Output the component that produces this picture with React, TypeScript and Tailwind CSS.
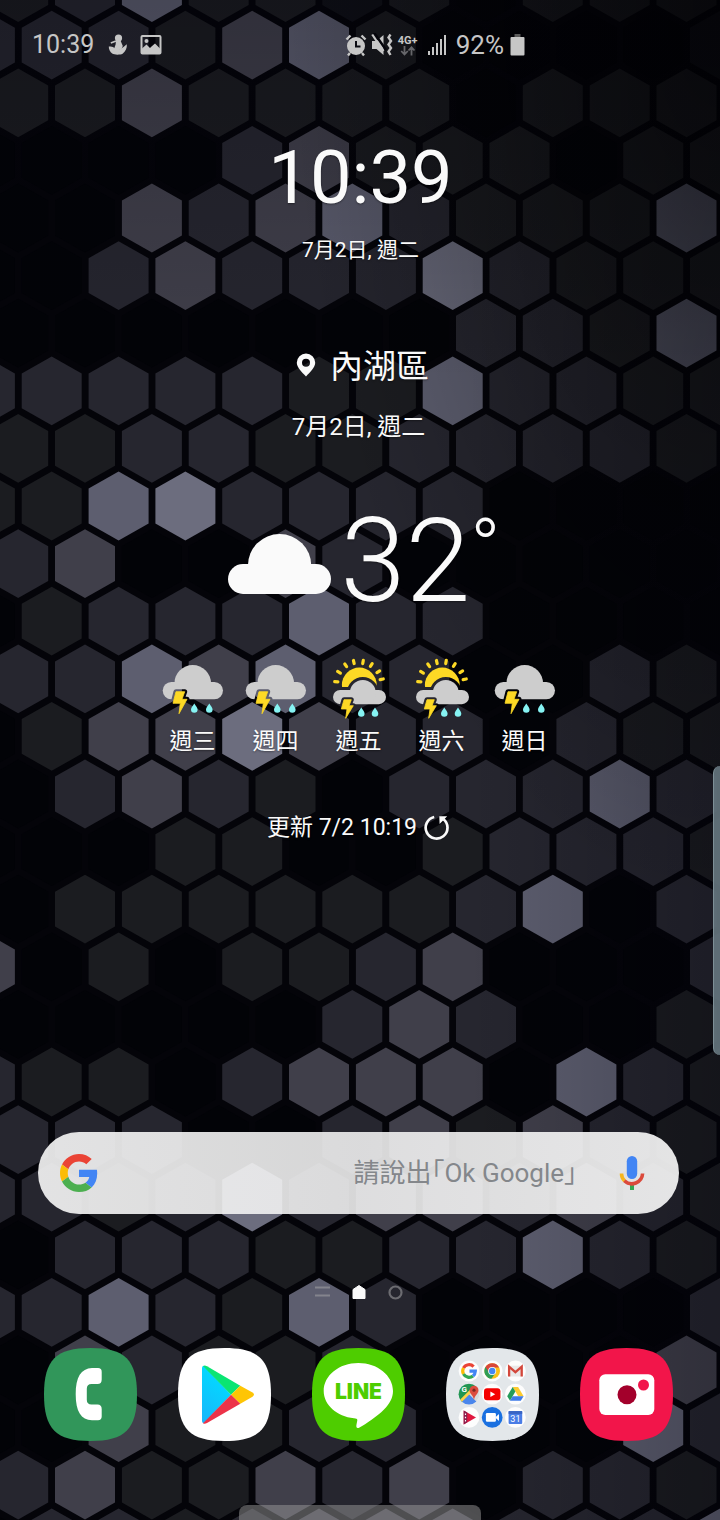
import type { ReactNode } from "react";

/* Brightness of every wallpaper cell, row by row. Even rows start at x=18, odd rows at x=-15. */
const ROWS = [
  "12411a10111",
  "22213410000a",
  "11311110111",
  "000023111011",
  "00323421114",
  "002322252111",
  "00000002214",
  "222221142211",
  "11221122221",
  "114522220000",
  "23003200000",
  "012224220000",
  "22434220021",
  "013353220211",
  "02321022242",
  "000110012221",
  "01111112402",
  "301011230002",
  "00000232001",
  "211023330421",
  "22200231321",
  "221252332321",
  "02221122421",
  "224214200002",
  "03211200003",
  "003112200042",
  "23113230221",
  "022123332224",
];

const FILL: Record<string, string> = {
  "0": "#020307",
  a: "#101117",
  "1": "#1b1c20",
  "2": "#26262f",
  "3": "#403f4a",
  "4": "#5d5e6f",
  "5": "#6c6d7e",
};

const PITCH_X = 66.83;
const PITCH_Y = 57.6;

function hexPoints(cx: number, cy: number) {
  const w = 30;
  const r = 34.4;
  const s = 17.4;
  return [
    [cx, cy - r],
    [cx + w, cy - s],
    [cx + w, cy + s],
    [cx, cy + r],
    [cx - w, cy + s],
    [cx - w, cy - s],
  ]
    .map((p) => p.map((n) => n.toFixed(1)).join(","))
    .join(" ");
}

function Wallpaper() {
  return (
    <svg
      className="absolute inset-0 h-full w-full"
      viewBox="0 0 720 1520"
      preserveAspectRatio="xMidYMin slice"
      aria-hidden="true"
    >
      <defs>
        <linearGradient id="shadeTop" x1="0" y1="0" x2="0" y2="1">
          <stop offset="0" stopColor="#00000a" stopOpacity="0.25" />
          <stop offset="0.25" stopColor="#00000a" stopOpacity="0" />
        </linearGradient>
        <linearGradient id="shadeRight" x1="0" y1="0" x2="1" y2="0">
          <stop offset="0.65" stopColor="#00000a" stopOpacity="0" />
          <stop offset="1" stopColor="#00000a" stopOpacity="0.25" />
        </linearGradient>
        <radialGradient id="shadeCorner" cx="1" cy="0" r="0.6">
          <stop offset="0" stopColor="#000" stopOpacity="0.5" />
          <stop offset="1" stopColor="#000" stopOpacity="0" />
        </radialGradient>
      </defs>
      <rect width="720" height="1520" fill="#040409" />
      {ROWS.map((row, r) =>
        row.split("").map((level, c) => (
          <polygon
            key={`${r}-${c}`}
            points={hexPoints((r % 2 === 0 ? 18.2 : -15.1) + c * PITCH_X, -12.4 + r * PITCH_Y)}
            fill={FILL[level]}
          />
        )),
      )}
      <rect width="720" height="1520" fill="url(#shadeTop)" />
      <rect width="720" height="1520" fill="url(#shadeRight)" />
      <rect width="720" height="1520" fill="url(#shadeCorner)" />
    </svg>
  );
}

function StatusBar() {
  return (
    <header className="flex h-[90px] items-center justify-between pl-8 pr-[192px] leading-8 text-[#c6c6c6]">
      <div className="flex items-center">
        <time className="text-[25px]">10:39</time>
        <svg className="ml-[14px]" width="20" height="22" viewBox="0 0 20 22" fill="currentColor" aria-label="通知" role="img">
          <circle cx="10.500" cy="4" r="3.600" />
          <path d="M8 6 12.500 6.500 14.800 12 13 16 6 15 7.600 10.400z" />
          <path d="M.8 12.600C3.200 12 5.400 12.600 7 14.600L12 15.200 15.500 13 18.800 10.200C19.200 14 17.600 17.400 14.600 19.800 12 21 6.400 21 4.200 19.600 2.200 18 .6 15.400.8 12.600z" />
          <path d="M2.800 9 8 7" stroke="currentColor" strokeWidth="1.600" />
        </svg>
        <svg className="ml-3" width="22" height="22" viewBox="0 0 22 22" aria-label="圖片" role="img">
          <rect x="1.500" y="2" width="19" height="17.500" rx="1" fill="none" stroke="currentColor" strokeWidth="2" />
          <circle cx="6.500" cy="7" r="2" fill="currentColor" />
          <path d="M2 19v-4.500l4.500-4 3.500 3.500 1.500-1.500 3.500-3 5 5V19z" fill="currentColor" />
        </svg>
      </div>
      <div className="flex items-center">
        <svg width="22" height="24" viewBox="0 0 22 24" fill="none" stroke="currentColor" aria-label="鬧鐘" role="img">
          <circle cx="11" cy="13" r="9" fill="currentColor" stroke="none" />
          <path d="M1.500 6.500 5.500 2.500M20.500 6.500 16.500 2.500M5 20 3 22.500M17 20l2 2.500" strokeWidth="2.400" />
          <path d="M11 8v5.500h4.500" stroke="#0b0b12" strokeWidth="2" />
        </svg>
        <svg className="ml-[3px]" width="24" height="24" viewBox="0 0 24 24" fill="none" stroke="currentColor" aria-label="靜音" role="img">
          <path d="M2 8H6.500L13.500 2V22L6.500 16H2z" fill="currentColor" stroke="none" />
          <path d="M4-.500 16 17" stroke="#05050b" strokeWidth="2.400" />
          <path d="M2.200 1.500 13.500 18" strokeWidth="2.200" />
          <path d="M20.500 1.500 18.500 4.500 21 8 18.500 11.500 21 15 18.500 18.500 20.500 22" strokeWidth="2.400" />
        </svg>
        <div className="ml-[3px] flex w-[22px] flex-col items-center">
          <span className="text-[11px] font-bold leading-[11px]">4G+</span>
          <svg width="16" height="10" viewBox="0 0 16 10" fill="none" stroke="#66666a" strokeWidth="1.800" aria-hidden="true">
            <path d="M4.500 0v8M1.200 5l3.300 3.500L7.800 5M11.500 9.500V1.500M8.500 4.500l3-3.200 3 3.200" />
          </svg>
        </div>
        <svg className="ml-[9px]" width="19" height="22" viewBox="0 0 19 22" fill="currentColor" aria-label="訊號" role="img">
          <rect x="0" y="17" width="2" height="4" />
          <rect x="4" y="13" width="2" height="8" />
          <rect x="8" y="9" width="2" height="12" />
          <rect x="12" y="5" width="2" height="16" />
          <rect x="16" y="1" width="2" height="20" />
        </svg>
        <span className="ml-[9px] text-[26px]">92%</span>
        <svg className="ml-[6px]" width="15" height="22" viewBox="0 0 15 22" aria-label="電池" role="img">
          <rect x="4.500" y="0" width="6" height="4" fill="#5a5a5a" />
          <rect x="0.500" y="3" width="14" height="18.500" rx="1" fill="#c6c6c6" />
        </svg>
      </div>
    </header>
  );
}

function Drops({ xs, y }: { xs: number[]; y: number }) {
  return (
    <>
      {xs.map((x) => (
        <path
          key={x}
          transform={`translate(${x} ${y})`}
          d="M0-4.800C1.500-2.400 3.300-.6 3.300 1.200A3.300 3.300 0 0 1-3.300 1.200C-3.300-.6-1.500-2.400 0-4.800z"
          fill="#86f3f3"
        />
      ))}
    </>
  );
}

function StormIcon({ id }: { id: string }) {
  const bolt = "15,35.700 23.700,35.700 21,43.300 26,43.300 18,57.700 19.300,47.300 12,47.300";
  return (
    <svg width="64" height="64" viewBox="0 0 64 64" role="img" aria-label="雷雨">
      <mask id={`${id}-m`}>
        <rect width="64" height="64" fill="#fff" />
        <polygon points={bolt} fill="#000" stroke="#000" strokeWidth="5" strokeLinejoin="round" />
      </mask>
      <g fill="#cdcdcd" mask={`url(#${id}-m)`}>
        <rect x="1.700" y="26" width="60.300" height="17.200" rx="8.600" />
        <circle cx="31.700" cy="27.500" r="18.400" clipPath="inset(0 0 6px 0)" />
      </g>
      <polygon points={bolt} fill="#fdd925" stroke="#fdd925" strokeWidth="0.800" />
      <Drops xs={[33.3, 48.3]} y={52.3} />
    </svg>
  );
}

function SunStormIcon({ id }: { id: string }) {
  const bolt = "17,43.700 24.300,43.700 22,49.700 26.300,49.700 18.700,62.300 20,53 14.300,53";
  const rays = [
    [9.3, 25.7],
    [12, 16.3],
    [18.7, 9.3],
    [26.8, 6],
    [36, 6],
    [44.3, 9],
    [51.3, 15.7],
    [54.7, 23.3],
  ];
  return (
    <svg width="64" height="64" viewBox="0 0 64 64" role="img" aria-label="晴時雷雨">
      <mask id={`${id}-b`}>
        <rect width="64" height="64" fill="#fff" />
        <polygon points={bolt} fill="#000" stroke="#000" strokeWidth="5" strokeLinejoin="round" />
      </mask>
      <mask id={`${id}-s`}>
        <rect width="64" height="64" fill="#fff" />
        <rect x="6" y="34" width="53" height="14.500" rx="7" stroke="#000" strokeWidth="6" />
        <circle cx="35.800" cy="37" r="16" />
        <rect y="36" width="64" height="28" />
      </mask>
      <circle cx="32.300" cy="29" r="17.400" fill="#fdd925" mask={`url(#${id}-s)`} />
      {rays.map(([x, y]) => {
        const d = Math.hypot(x - 32, y - 28);
        const ux = ((x - 32) / d) * 1.6;
        const uy = ((y - 28) / d) * 1.6;
        return (
          <line
            key={x}
            x1={x - ux}
            y1={y - uy}
            x2={x + ux}
            y2={y + uy}
            stroke="#fdd925"
            strokeWidth="3.200"
            strokeLinecap="round"
          />
        );
      })}
      <g fill="#cdcdcd" mask={`url(#${id}-b)`}>
        <rect x="6" y="34" width="53" height="14.200" rx="7.100" />
        <circle cx="35.800" cy="37" r="13" clipPath="inset(0 0 5px 0)" />
      </g>
      <polygon points={bolt} fill="#fdd925" stroke="#fdd925" strokeWidth="0.800" />
      <Drops xs={[34.3, 48]} y={56.3} />
    </svg>
  );
}

const FORECAST = [
  { day: "週三", sunny: false },
  { day: "週四", sunny: false },
  { day: "週五", sunny: true },
  { day: "週六", sunny: true },
  { day: "週日", sunny: false },
];

function Widgets() {
  return (
    <main className="flex flex-col items-center text-[#fafafa] [text-shadow:0_1px_2px_rgba(0,0,0,0.4)]">
      <section className="mt-12 flex flex-col items-center pl-1">
        <time className="text-[74px] leading-[80px]">10:39</time>
        <p className="mt-4 text-[21px] leading-8">7月2日, 週二</p>
      </section>
      <section className="flex flex-col items-center">
        <h1 className="mt-[81px] flex items-center pl-2 text-[33px] leading-10">
          <svg className="mb-1 mr-[14px]" width="20" height="24" viewBox="0 0 20 24" aria-hidden="true">
            <path
              fillRule="evenodd"
              fill="currentColor"
              d="M10 .5A9.200 9.200 0 0 1 19.200 9.700C19.200 14.500 14 19 10 23.500 6 19 .8 14.500.8 9.700A9.200 9.200 0 0 1 10 .5zM10 5.700a4 4 0 1 0 0 8 4 4 0 0 0 0-8z"
            />
          </svg>
          內湖區
        </h1>
        <p className="mt-6 text-2xl leading-8">7月2日, 週二</p>
        <div className="mt-[67px] flex h-[100px] items-start pl-3">
          <svg className="mr-[9px] mt-6" width="103" height="60" viewBox="0 0 103 60" fill="#fafafa" role="img" aria-label="多雲">
            <rect y="30" width="103" height="30" rx="15" />
            <circle cx="51.600" cy="31.700" r="31.700" clipPath="inset(0 0 15px 0)" />
          </svg>
          <p className="flex items-start font-light">
            <span className="text-[117px] leading-[102px]">32</span>
            <span className="text-[80px] leading-[76px]">°</span>
          </p>
        </div>
        <ul className="mt-[46px] flex gap-[19px]">
          {FORECAST.map((f, i) => (
            <li key={f.day} className="flex flex-col items-center">
              {f.sunny ? <SunStormIcon id={`day${i}`} /> : <StormIcon id={`day${i}`} />}
              <span className="mt-[6px] text-[23px] leading-8">{f.day}</span>
            </li>
          ))}
        </ul>
        <div className="mt-[54px] flex h-8 items-center text-[23px]">
          更新 7/2 10:19
          <button type="button" aria-label="重新整理" className="ml-[7px]">
            <svg width="26" height="26" viewBox="0 0 26 26" aria-hidden="true">
              <path d="M19.500 4.200A10.900 10.900 0 1 1 10.200 2" fill="none" stroke="currentColor" strokeWidth="2.700" />
              <path d="M15.300 1.300H23.200L15.600 9z" fill="currentColor" />
            </svg>
          </button>
        </div>
      </section>
    </main>
  );
}

function GoogleG({ className }: { className?: string }) {
  return (
    <svg className={className} width="38" height="38" viewBox="0 0 48 48" aria-hidden="true">
      <path fill="#EA4335" d="M24 9.500c3.540 0 6.710 1.220 9.210 3.600l6.850-6.850C35.900 2.380 30.470 0 24 0 14.620 0 6.510 5.380 2.560 13.220l7.980 6.190C12.430 13.720 17.740 9.500 24 9.500z" />
      <path fill="#4285F4" d="M46.980 24.550c0-1.570-.15-3.090-.38-4.550H24v9.020h12.940c-.58 2.960-2.260 5.480-4.780 7.180l7.730 6c4.510-4.180 7.090-10.360 7.090-17.650z" />
      <path fill="#FBBC05" d="M10.530 28.590c-.48-1.450-.76-2.990-.76-4.590s.27-3.140.76-4.590l-7.980-6.190C.92 16.460 0 20.120 0 24c0 3.880.92 7.540 2.560 10.780l7.970-6.190z" />
      <path fill="#4CAF50" d="M24 48c6.480 0 11.930-2.130 15.890-5.810l-7.730-6c-2.150 1.450-4.920 2.300-8.160 2.300-6.260 0-11.570-4.220-13.470-9.910l-7.980 6.190C6.510 42.620 14.620 48 24 48z" />
    </svg>
  );
}

function SearchBar() {
  return (
    <form
      role="search"
      className="mx-[38px] flex h-[82px] items-center rounded-full bg-linear-to-r from-[#f3f3f3]/92 via-[#f3f3f3]/88 to-[#f6f6f6]/92 pl-[22px] pr-[34px]"
      onSubmit={(e) => e.preventDefault()}
    >
      <GoogleG className="shrink-0" />
      <input
        type="search"
        aria-label="Google 搜尋"
        placeholder="請說出「Ok Google」"
        className="min-w-0 flex-1 bg-transparent pl-5 pr-1 text-right text-[26px] leading-10 text-[#44474b] outline-none [font-feature-settings:'halt'] placeholder:text-[#84878b] placeholder:opacity-100"
      />
      <button type="button" aria-label="語音搜尋" className="ml-4 shrink-0">
        <svg width="26" height="36" viewBox="0 0 26 36" aria-hidden="true">
          <path d="M13 29.500V35" stroke="#34a853" strokeWidth="4" />
          <path d="M2.500 18.500c0 3 1.200 5.600 3.100 7.500" fill="none" stroke="#f6b51e" strokeWidth="3.600" />
          <path d="M5.400 25.800a10.800 10.800 0 0 0 18.200-7.300" fill="none" stroke="#db4a3c" strokeWidth="3.600" />
          <rect x="7.800" y="1" width="10.400" height="23" rx="5.200" fill="#4285f4" />
        </svg>
      </button>
    </form>
  );
}

function PageDots() {
  return (
    <nav aria-label="頁面" className="mt-[70px] flex h-4 items-center justify-center gap-[22px]">
      <button type="button" aria-label="Bixby Home">
        <svg width="15" height="14" viewBox="0 0 15 14" aria-hidden="true">
          <path d="M0 2.500h15M0 10.500h15" stroke="#84848d" strokeWidth="2" />
        </svg>
      </button>
      <button type="button" aria-label="主頁" aria-current="page">
        <svg width="14" height="14" viewBox="0 0 14 14" aria-hidden="true">
          <path d="M1 4.500 7 .5l6 4v9H1z" fill="#fafafa" stroke="#fafafa" />
        </svg>
      </button>
      <button type="button" aria-label="第 2 頁">
        <svg width="15" height="15" viewBox="0 0 15 15" aria-hidden="true">
          <circle cx="7.500" cy="7.500" r="6" fill="none" stroke="#6c6c71" strokeWidth="2.200" />
        </svg>
      </button>
    </nav>
  );
}

function Tile({ label, fill, children }: { label: string; fill: string; children: ReactNode }) {
  return (
    <button type="button" aria-label={label}>
      <svg width="93" height="93" viewBox="0 0 93 93" aria-hidden="true">
        <path d="M46.500 0C81 0 93 12 93 46.500S81 93 46.500 93 0 81 0 46.500 12 0 46.500 0z" fill={fill} />
        {children}
      </svg>
    </button>
  );
}

function FolderContents() {
  const at = (col: number, row: number) => `translate(${23 + col * 23.2} ${23 + row * 23.2})`;
  return (
    <>
      {[0, 1, 2].map((row) =>
        [0, 1, 2].map((col) => <circle key={`${row}${col}`} transform={at(col, row)} r="10.400" fill="#fdfdfd" />),
      )}
      <g transform={at(0, 0)} fill="none" strokeWidth="3.200">
        <path d="M4.600-4.300A6.300 6.300 0 0 0-5.500-3" stroke="#ea4335" />
        <path d="M-5.500-3a6.300 6.300 0 0 0 0 6" stroke="#fbbc05" />
        <path d="M-5.500 3A6.300 6.300 0 0 0 4 4.900" stroke="#34a853" />
        <path d="M4 4.900A6.300 6.300 0 0 0 6.300.2H.5" stroke="#4285f4" />
      </g>
      <g transform={at(1, 0)}>
        <circle r="7.800" fill="#fbc116" />
        <path d="M0 0-6.800-3.900A7.800 7.800 0 0 0-.8 7.800L3.400 2z" fill="#2f9e57" />
        <path d="M0 0V-3.600H6.900A7.800 7.800 0 0 0-6.800-3.900L-3.200 1.600z" fill="#d9473b" />
        <circle r="4" fill="#fff" />
        <circle r="3.200" fill="#4688f1" />
      </g>
      <g transform={at(2, 0)}>
        <path d="M-7.300-5.300H7.300V5.500H-7.300z" fill="#e9e9e9" />
        <path d="M-6.300 5.500V-4.300L0 1.200 6.300-4.300V5.500" fill="none" stroke="#d4473b" strokeWidth="2.300" />
      </g>
      <g transform={at(0, 1)}>
        <clipPath id="mapClip">
          <circle r="10.400" />
        </clipPath>
        <g clipPath="url(#mapClip)">
          <rect x="-11" y="-11" width="22" height="22" fill="#d9dbdc" />
          <path d="M-11-11H9L-9 11H-11z" fill="#219653" />
          <path d="M-11 11 0 0 11 11z" fill="#4a86ec" />
          <path d="M-10 8.500 5-6.500" stroke="#fcd04b" strokeWidth="2.800" />
        </g>
        <path d="M5-8.500A4.500 4.500 0 0 1 9.500-4C9.500-.5 5.500 1 5 6 4.500 1 .5-.5.5-4A4.500 4.500 0 0 1 5-8.500z" fill="#dc4b3e" />
        <circle cx="5" cy="-4" r="1.600" fill="#7c2a22" />
        <text x="-7.500" y="-2" fontSize="8" fontWeight="700" fill="#fff">G</text>
      </g>
      <g transform={at(1, 1)}>
        <rect x="-8.200" y="-6" width="16.400" height="12" rx="3" fill="#f40000" />
        <path d="M-1.800-2.800 3 0-1.800 2.800z" fill="#fff" />
      </g>
      <g transform={at(2, 1)}>
        <path d="M-2.700-7.300H2.700L8.200 2H2.800z" fill="#fccb2f" />
        <path d="M-2.700-7.300-8.200 2-5.400 6.600 0-2.700z" fill="#259b5a" />
        <path d="M-2.700 2H8.200L5.400 6.600H-5.400z" fill="#3f7be8" />
      </g>
      <g transform={at(0, 2)}>
        <path d="M-5.300-6.800 7 0-5.300 7z" fill="#e0173f" />
        <path d="M-5.300-6.800V7L-1.800 4.800V-4.800z" fill="#8c1d4c" />
        <path d="M-3.500-4v8" stroke="#fff" strokeWidth="1.200" strokeDasharray="1.500 1.800" />
      </g>
      <g transform={at(1, 2)}>
        <circle r="10.400" fill="#1a70e0" />
        <rect x="-6.300" y="-4.300" width="10" height="8.600" rx="1.200" fill="#fff" />
        <path d="M3.500-.5 6.800-3.500v7L3.500.5z" fill="#fff" />
      </g>
      <g transform={at(2, 2)}>
        <rect x="-6.800" y="-6.300" width="13.600" height="12.800" rx="1" fill="#4a7de6" />
        <rect x="-6.800" y="-6.300" width="13.600" height="2.800" fill="#3964c3" />
        <text y="4.600" fontSize="9" textAnchor="middle" fill="#fff">31</text>
      </g>
    </>
  );
}

function Dock() {
  return (
    <footer className="mt-12 flex justify-center gap-[41px] pb-[79px]">
      <Tile label="電話" fill="#31965a">
        <path
          d="M54 20h-6C37 20.500 31.700 29 31.700 46.200S37 71.800 48 72.300h6q3.700 0 3.700-3.700V61q0-4.500-4.200-4.500H47.500q-4.700 0-4.700-4.700V40.700q0-4.700 4.700-4.700h6q4.200 0 4.200-4.500V23.700Q57.700 20 54 20z"
          fill="#fff"
        />
      </Tile>
      <Tile label="Play 商店" fill="#fff">
        <defs>
          <linearGradient id="playBlue" x1="0" y1="1" x2="0.4" y2="0">
            <stop offset="0" stopColor="#19b5fb" />
            <stop offset="1" stopColor="#00dcff" />
          </linearGradient>
        </defs>
        <path d="M24 20q0-2.500 2-2L53 46.700 26 75q-2 .5-2-2z" fill="url(#playBlue)" />
        <path d="M25 18q1.500-1.200 4 .2L62.300 37.700 53 46.700z" fill="#0ae573" />
        <path d="M62.300 37.700 74.500 44.500q3 2 0 4.200L62.300 55.700 53 46.700z" fill="#fec505" />
        <path d="M25 75.200q1.500 1.200 4-.2L62.300 55.700 53 46.700z" fill="#ec3349" />
      </Tile>
      <Tile label="LINE" fill="#4ecd00">
        <path
          d="M46.400 15C65.500 15 81 27.500 81 43c0 7-3.500 13-9 18.500C65 68.500 54 76 47.500 79.500c-3 1.500-3.500-.5-3-3l.8-4c.2-2-1.300-2-3.300-2.200C25 68.500 11.700 57 11.700 43 11.700 27.500 27 15 46.400 15z"
          fill="#fff"
        />
        <text x="46.400" y="51" textAnchor="middle" fontSize="21" fill="#4ecd00" className="font-[Inter,sans-serif] font-black">
          LINE
        </text>
      </Tile>
      <Tile label="Google 資料夾" fill="#e3e7ea">
        <FolderContents />
      </Tile>
      <Tile label="相機" fill="#f2154a">
        <rect x="19.300" y="26.300" width="55" height="40.700" rx="6" fill="#fff" />
        <circle cx="47" cy="46.700" r="9.500" fill="#a3002b" />
        <circle cx="63.500" cy="37" r="5.500" fill="#f2154a" />
      </Tile>
    </footer>
  );
}

export default function App() {
  return (
    <div
      lang="zh-Hant"
      className="relative min-h-screen overflow-hidden bg-[#040409] font-[Roboto,'Noto_Sans_CJK_TC',sans-serif]"
    >
      <Wallpaper />
      <div className="relative flex min-h-screen flex-col pr-[3px]">
        <StatusBar />
        <Widgets />
        <div className="flex-1" />
        <SearchBar />
        <PageDots />
        <Dock />
      </div>
      <div className="absolute right-0 top-[766px] h-[289px] w-[7px] rounded-l-lg border-l border-[#7d8f96] bg-[#66777f]/90" />
      <div className="absolute bottom-0 left-1/2 h-[15px] w-[242px] -translate-x-1/2 rounded-t-lg bg-[#9a9a9a]/50" />
    </div>
  );
}
